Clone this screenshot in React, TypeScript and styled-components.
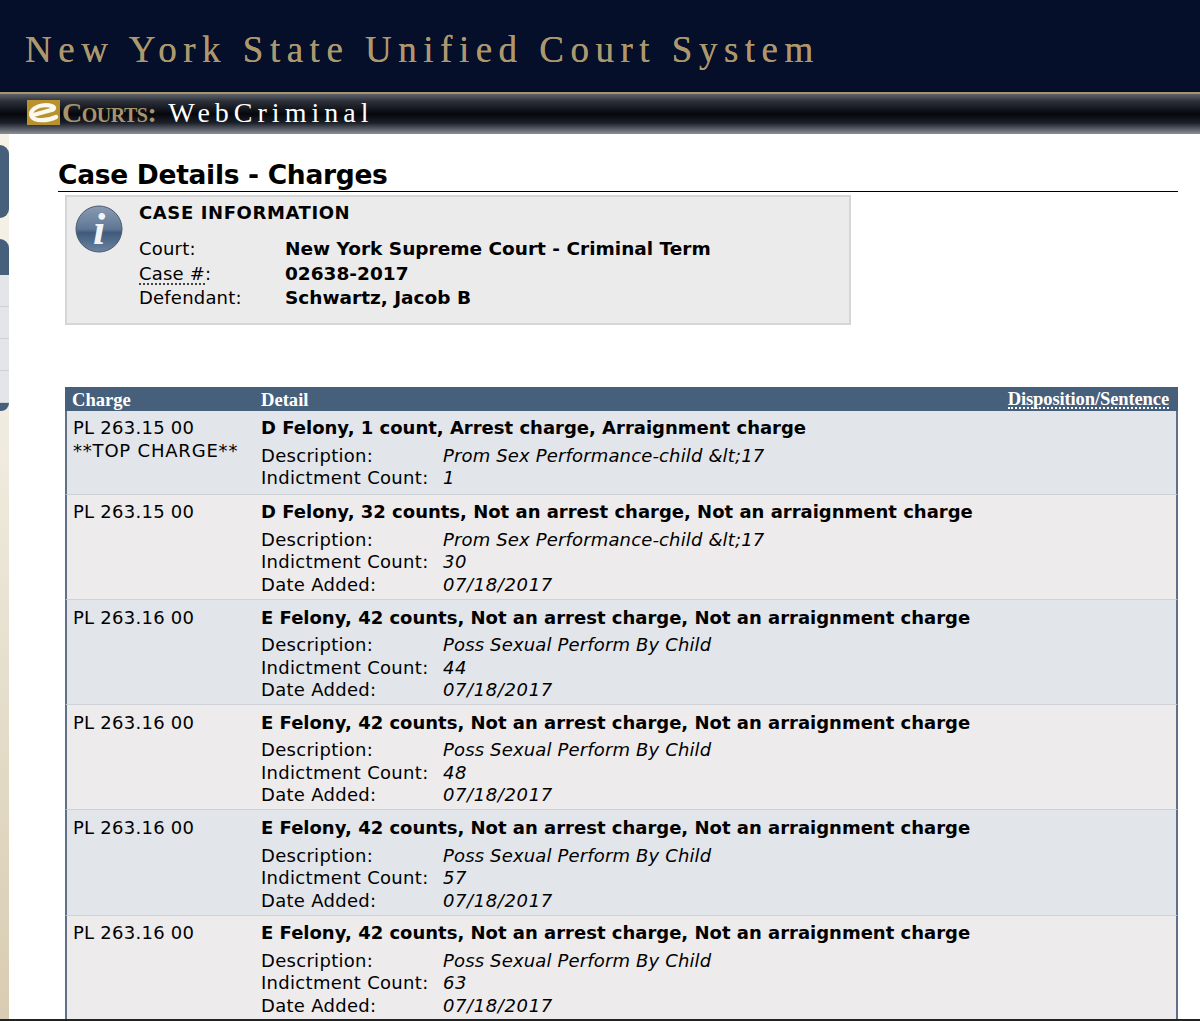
import React from "react";
import styled, { createGlobalStyle } from "styled-components";

const GlobalStyle = createGlobalStyle`
  html, body {
    margin: 0;
    padding: 0;
    background: #fff;
    height: 1021px;
    overflow: hidden;
  }
  body {
    font-family: "DejaVu Sans", Verdana, sans-serif;
    color: #000;
  }
`;

const Banner = styled.header`
  height: 92px;
  box-sizing: border-box;
  background: #060f2a;
  padding: 29px 0 0 25px;
  font-family: "Liberation Serif", serif;
  font-size: 37px;
  line-height: 42px;
  letter-spacing: 6.5px;
  color: #ad986e;
  text-shadow: 0 0 0.6px #ad986e;
  white-space: nowrap;
`;

const SubBanner = styled.div`
  height: 42px;
  box-sizing: border-box;
  border-top: 2px solid #a8946b;
  background: linear-gradient(#5d626b 0%, #2c3039 18%, #05070c 50%, #1b1f29 72%, #8a8f98 100%);
  padding: 0 0 2px 27px;
  display: flex;
  align-items: center;
  font-family: "Liberation Serif", serif;
  white-space: nowrap;
`;

const CourtsLabel = styled.span`
  margin-left: 2px;
  font-size: 28px;
  font-variant: small-caps;
  font-weight: 700;
  color: #a8946b;
  letter-spacing: -0.5px;
`;

const AppName = styled.span`
  margin-left: 12px;
  font-size: 28px;
  letter-spacing: 5px;
  color: #fff;
`;

const Body = styled.div`
  display: flex;
`;

const SideRail = styled.aside`
  width: 9px;
  height: 887px;
  background: linear-gradient(#f6f2e8 0%, #f0ebdf 35%, #d8ccb2 100%);
  flex: none;
  display: flex;
  flex-direction: column;
  padding-top: 11px;
  box-sizing: border-box;
`;

const RailBlock = styled.div`
  width: 9px;
  height: 73px;
  background: #46607c;
  border-radius: 0 9px 9px 0;
  margin-bottom: 21px;
`;

const RailMenu = styled.div`
  width: 9px;
  background: #46607c;
  border-radius: 0 9px 0 0;
  padding-top: 36px;
`;

const RailItem = styled.div`
  height: 31px;
  background: #e4e5e9;
  border-bottom: 1px solid #cfd1d5;
`;

const RailFoot = styled.div`
  width: 9px;
  height: 8px;
  background: #46607c;
  border-radius: 0 0 8px 0;
`;

const Main = styled.main`
  flex: 1;
  min-width: 0;
  padding: 24px 22px 0 49px;
`;

const PageTitle = styled.h1`
  margin: 0;
  font-size: 26.5px;
  line-height: 33px;
  font-weight: 700;
  border-bottom: 1px solid #000;
  letter-spacing: -0.3px;
`;

const InfoBox = styled.section`
  width: 786px;
  height: 130px;
  box-sizing: border-box;
  margin: 3px 0 0 7px;
  background: #ecebec;
  border: 2px solid #d6d6d6;
  position: relative;
  padding: 4px 0 0 72px;
`;

const InfoIcon = styled.svg`
  position: absolute;
  left: 8px;
  top: 8px;
  width: 48px;
  height: 48px;
`;

const InfoTitle = styled.h2`
  margin: 0 0 12px;
  font-size: 18px;
  line-height: 24px;
  font-weight: 700;
  letter-spacing: 0.6px;
`;

const InfoRow = styled.div`
  display: grid;
  grid-template-columns: 146px 1fr;
  font-size: 18px;
  line-height: 24.5px;
  letter-spacing: 0.2px;
`;

const Abbr = styled.span`
  border-bottom: 2px dotted #444;
  line-height: 18px;
  display: inline-block;
`;

const Strong = styled.span`
  font-weight: 700;
  letter-spacing: 0;
  font-size: 18.5px;
`;

const Table = styled.div`
  margin: 61.5px 0 0 7px;
`;

const HeadRow = styled.div`
  height: 24px;
  background: #46607c;
  display: grid;
  grid-template-columns: 189px 1fr auto;
  padding: 0 9px 0 7px;
  font-family: "Liberation Serif", serif;
  font-size: 18.6px;
  font-weight: 700;
  line-height: 25px;
  color: #fff;
`;

const SortLink = styled.span`
  border-bottom: 2px dotted #fff;
  line-height: 20px;
  height: 18px;
  align-self: center;
  letter-spacing: -0.15px;
`;

const Row = styled.div<{ $alt: boolean; $height: number }>`
  display: grid;
  grid-template-columns: 188px 1fr;
  box-sizing: border-box;
  height: ${p => p.$height}px;
  padding: 5.75px 0 0 6px;
  background: ${p => (p.$alt ? "#e2e5ea" : "#eeebec")};
  border-left: 2px solid #5f7087;
  border-right: 2px solid #5f7087;
  border-bottom: 1px solid #cfd3d8;
  overflow: hidden;
`;

const ChargeCell = styled.div`
  font-size: 18px;
  line-height: 23px;
  letter-spacing: 0.25px;
`;

const TopCharge = styled.div`
  letter-spacing: 0.8px;
`;

const DetailTitle = styled.div`
  font-size: 18px;
  font-weight: 700;
  line-height: 23px;
  margin-bottom: 5.5px;
`;

const DetailLine = styled.div`
  display: grid;
  grid-template-columns: 182px 1fr;
  font-size: 18px;
  line-height: 22.5px;
  letter-spacing: 0.3px;
`;

const DetailValue = styled.span<{ $numeric?: boolean }>`
  font-style: italic;
  letter-spacing: ${p => (p.$numeric ? "0.6px" : "0.15px")};
`;

interface Charge {
  code: string;
  top?: boolean;
  title: string;
  description: string;
  indictment: string;
  added?: string;
  height: number;
}

const felonyE = "E Felony, 42 counts, Not an arrest charge, Not an arraignment charge";
const possDesc = "Poss Sexual Perform By Child";
const promDesc = "Prom Sex Performance-child &lt;17";

const charges: Charge[] = [
  {
    code: "PL 263.15 00",
    top: true,
    title: "D Felony, 1 count, Arrest charge, Arraignment charge",
    description: promDesc,
    indictment: "1",
    height: 84,
  },
  {
    code: "PL 263.15 00",
    title: "D Felony, 32 counts, Not an arrest charge, Not an arraignment charge",
    description: promDesc,
    indictment: "30",
    added: "07/18/2017",
    height: 105.25,
  },
  { code: "PL 263.16 00", title: felonyE, description: possDesc, indictment: "44", added: "07/18/2017", height: 105.25 },
  { code: "PL 263.16 00", title: felonyE, description: possDesc, indictment: "48", added: "07/18/2017", height: 105.25 },
  { code: "PL 263.16 00", title: felonyE, description: possDesc, indictment: "57", added: "07/18/2017", height: 105.25 },
  { code: "PL 263.16 00", title: felonyE, description: possDesc, indictment: "63", added: "07/18/2017", height: 105.25 },
];

const BottomEdge = styled.div`
  position: fixed;
  left: 0;
  right: 0;
  bottom: 0;
  height: 2px;
  background: #222;
`;

const LogoSvg = styled.svg`
  flex: none;
  width: 33px;
  height: 25px;
  margin-bottom: 1px;
`;

const CourtsLogo: React.FC = () => (
  <LogoSvg viewBox="0 0 33 25">
    <rect width="33" height="25" fill="#b8922f" />
    <path
      d="M8 14.5 L26 9.5 C30 6.5 22 4.5 15 5.5 C7 7 2 12 5 17 C8 21 20 21.5 29 17"
      fill="none"
      stroke="#fbf8ee"
      strokeWidth="4.2"
      strokeLinecap="round"
    />
  </LogoSvg>
);

export default function App() {
  return (
    <>
      <GlobalStyle />
      <Banner>New York State Unified Court System</Banner>
      <SubBanner>
        <CourtsLogo />
        <CourtsLabel>Courts:</CourtsLabel>
        <AppName>WebCriminal</AppName>
      </SubBanner>
      <Body>
        <SideRail>
          <RailBlock />
          <RailMenu>
            <RailItem />
            <RailItem />
            <RailItem />
            <RailItem />
          </RailMenu>
          <RailFoot />
        </SideRail>
        <Main>
          <PageTitle>Case Details - Charges</PageTitle>
          <InfoBox>
            <InfoIcon viewBox="0 0 48 48">
              <defs>
                <linearGradient id="infoFill" x1="0" y1="0" x2="0" y2="1">
                  <stop offset="0" stopColor="#8a9bb1" />
                  <stop offset="0.5" stopColor="#5f7796" />
                  <stop offset="0.58" stopColor="#3f5a7b" />
                  <stop offset="1" stopColor="#6b84a1" />
                </linearGradient>
              </defs>
              <circle cx="24" cy="24" r="23" fill="url(#infoFill)" stroke="#4a5a6e" strokeWidth="1" />
              <text
                x="24"
                y="39"
                textAnchor="middle"
                fontFamily="Liberation Serif, serif"
                fontStyle="italic"
                fontWeight="700"
                fontSize="44"
                fill="#f1f3f6"
              >
                i
              </text>
            </InfoIcon>
            <InfoTitle>CASE INFORMATION</InfoTitle>
            <InfoRow>
              <span>Court:</span>
              <Strong>New York Supreme Court - Criminal Term</Strong>
            </InfoRow>
            <InfoRow>
              <span>
                <Abbr>Case #</Abbr>:
              </span>
              <Strong>02638-2017</Strong>
            </InfoRow>
            <InfoRow>
              <span>Defendant:</span>
              <Strong>Schwartz, Jacob B</Strong>
            </InfoRow>
          </InfoBox>
          <Table>
            <HeadRow>
              <span>Charge</span>
              <span>Detail</span>
              <SortLink>Disposition/Sentence</SortLink>
            </HeadRow>
            {charges.map((c, i) => (
              <Row key={i} $alt={i % 2 === 0} $height={c.height}>
                <ChargeCell>
                  {c.code}
                  {c.top && <TopCharge>**TOP CHARGE**</TopCharge>}
                </ChargeCell>
                <div>
                  <DetailTitle>{c.title}</DetailTitle>
                  <DetailLine>
                    <span>Description:</span>
                    <DetailValue>{c.description}</DetailValue>
                  </DetailLine>
                  <DetailLine>
                    <span>Indictment Count:</span>
                    <DetailValue $numeric>{c.indictment}</DetailValue>
                  </DetailLine>
                  {c.added && (
                    <DetailLine>
                      <span>Date Added:</span>
                      <DetailValue $numeric>{c.added}</DetailValue>
                    </DetailLine>
                  )}
                </div>
              </Row>
            ))}
          </Table>
        </Main>
      </Body>
      <BottomEdge />
    </>
  );
}
